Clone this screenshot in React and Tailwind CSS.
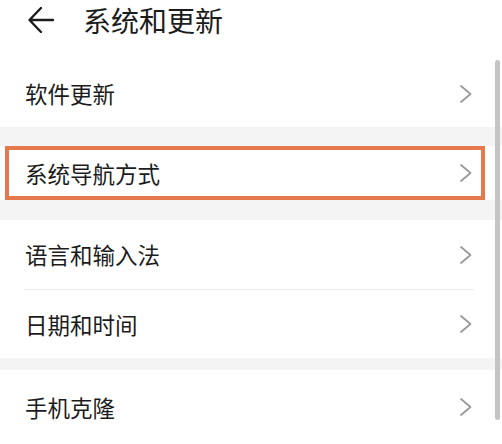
import React from 'react';

const Chevron = () => (
  <svg width="14" height="20" viewBox="0 0 14 20" fill="none" className="shrink-0">
    <path d="M2 2 L11.5 10 L2 18" stroke="#9a9a9a" strokeWidth="1.8" strokeLinecap="round" strokeLinejoin="round" />
  </svg>
);

const Row = ({ label, className = '' }) => (
  <div className={`flex items-center justify-between pl-[25px] pr-[29px] ${className}`}>
    <span className="text-[22.5px] leading-none">{label}</span>
    <Chevron />
  </div>
);

const App = () => {
  return (
    <div className="relative w-[502px] h-[444px] overflow-hidden bg-white text-[#1c1c1c] font-['Noto_Sans_CJK_SC',sans-serif]">
      <div className="flex items-center h-[40px] pl-[27px] gap-[28px]">
        <svg width="28" height="28" viewBox="0 0 28 28" fill="none">
          <path d="M26 14 H3 M14 2 L2.5 14 L14 26" stroke="#1c1c1c" strokeWidth="2.4" strokeLinecap="round" strokeLinejoin="round" />
        </svg>
        <span className="text-[28px] leading-none">系统和更新</span>
      </div>

      <div className="h-[20px]" />
      <Row label="软件更新" className="h-[67px]" />

      <div className="h-[19px] bg-[#f4f4f4]" />

      <div className="h-[54px] bg-white pl-[5px] pr-[17px]">
        <div className="flex items-center justify-between h-full border-[4px] border-[#e5794b] pl-[16px] pr-[8px]">
          <span className="text-[22.5px] leading-none">系统导航方式</span>
          <Chevron />
        </div>
      </div>

      <div className="h-[20px] bg-[#f4f4f4]" />

      <Row label="语言和输入法" className="h-[69px]" />
      <div className="h-px bg-[#ebebeb] ml-[24px] mr-[28px]" />
      <Row label="日期和时间" className="h-[68px]" />

      <div className="h-[12px] bg-[#f4f4f4]" />

      <Row label="手机克隆" className="h-[74px]" />

      <div className="absolute right-[2px] top-[60px] w-[5px] h-[360px] rounded-full bg-[#c4c4c4]" />
    </div>
  );
};

export default App;
